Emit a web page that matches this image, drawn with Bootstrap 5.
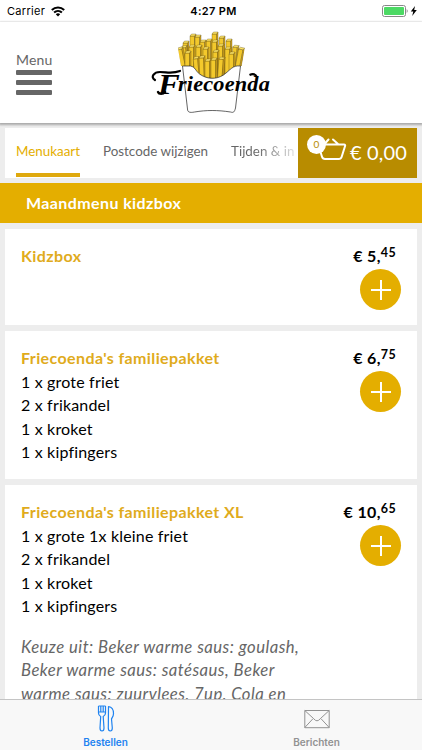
<!DOCTYPE html>
<html lang="nl">
<head>
    <meta charset="UTF-8">
    <meta name="viewport" content="width=device-width, initial-scale=1.0">
    <title>Friecoenda</title>
    <link rel="stylesheet" href="https://cdn.jsdelivr.net/npm/bootstrap@5.3.0/dist/css/bootstrap.min.css">
    <style>
        body { font-family: Lato, "Open Sans", sans-serif; font-size: 16px; line-height: 23.5px; background: #ededed; color: #000; height: 100vh; letter-spacing: .17px; }
        .ios { font-family: Inter, "Liberation Sans", sans-serif; letter-spacing: 0; }
        .status-bar { height: 22px; font-size: 11px; line-height: 22px; padding: 0 5px 0 7px; }
        .status-bar > div { flex: 1 1 0; }
        .carrier { letter-spacing: .3px; }
        .clock { letter-spacing: .35px; margin-left: 3px; }
        .site-header { height: 101px; padding: 0 16px; box-shadow: 0 1px 2px 1px rgba(0,0,0,.28); }
        .menu-btn { color: #666; padding-top: 27px; line-height: 21px; font-size: 14px; width: 36px; }
        .menu-btn i { display: block; height: 5px; margin-bottom: 5px; background: #666; border-radius: 1px; }
        .logo { width: 130px; height: 95px; margin: 3px 0 0 93px; }
        .tab-row { height: 50px; margin: 5px 5px 5px 5px; }
        .tab-links { font-size: 13.4px; color: #666; padding-left: 11px; gap: 23px; white-space: nowrap; line-height: 46px; letter-spacing: 0; }
        .tab-links .active { color: #e4ae00; border-bottom: 4px solid #dfa90d; height: 49px; }
        .fade-out { background: linear-gradient(90deg, #666 40%, #ddd 98%); -webkit-background-clip: text; background-clip: text; color: transparent; }
        .cart { background: #b88c00; color: #fff; width: 119px; font-size: 20px; padding: 0 10px 0 8px; }
        .cart-count { left: 1px; top: 7px; width: 19px; height: 19px; line-height: 19px; font-size: 10px; background: #fff; color: #b88c00; }
        .cat-title { background: #e4ae00; color: #fff; height: 40px; line-height: 39px; padding-left: 26px; margin-bottom: 6px; letter-spacing: .4px; }
        .product { background: #fff; margin: 0 5px 6px; padding: 15.5px 16px 15px; }
        .product:first-child { margin-top: -.6px; }
        .product h2 { color: #e0ab1c; font-size: 16px; line-height: 23.5px; margin: 0; font-weight: 700; letter-spacing: .39px; }
        .price { height: 25px; padding-right: 5px; letter-spacing: .35px; white-space: nowrap; }
        .price sup { font-size: 12.5px; top: -5px; line-height: 0; vertical-align: baseline; }
        .add { width: 41px; height: 41px; background: #e4ae00; }
        .choice { color: #666; width: 300px; margin-top: 18px; font-size: 16.7px; letter-spacing: .46px; white-space: nowrap; }
        .tabbar { height: 51px; background: #f8f8f8; border-top: 1px solid #c4c4c4; font-size: 10px; line-height: 12px; color: #929292; }
        .tabbar svg { display: block; margin: 0 auto; }
        .tabbar span { position: relative; top: 2px; }
        .tabbar .current { color: #1f83f0; }
    </style>
</head>
<body class="d-flex flex-column overflow-hidden">

    <div class="status-bar ios bg-white d-flex flex-shrink-0">
        <div class="d-flex align-items-center">
            <span class="carrier">Carrier</span>
            <svg class="ms-1" width="16" height="11" viewBox="-2 0 16 11" fill="none" stroke="#000" stroke-width="2">
                <path d="M.8 4C4.3.6 9.7.6 13.2 4M3.1 6.5c2.2-2.1 5.6-2.1 7.8 0"/>
                <path d="M7 10.5 4.8 8.2q2.2-1.8 4.4 0z" fill="#000" stroke="none"/>
            </svg>
        </div>
        <div class="clock text-center fw-semibold">4:27 PM</div>
        <div class="d-flex align-items-center justify-content-end">
            <svg width="35" height="12" viewBox="0 0 35 12">
                <rect x=".5" y=".5" width="23" height="11" rx="2" fill="#fff" stroke="#888"/>
                <rect x="2" y="2" width="20" height="8" rx="1" fill="#4cd964"/>
                <path d="M24.7 4q2 2 0 4z" fill="#888"/>
                <path d="M33 1 28.8 6.6h2.5L30.2 11l4.6-6h-2.6z"/>
            </svg>
        </div>
    </div>

    <header class="site-header bg-white d-flex flex-shrink-0">
        <div class="menu-btn"><span class="menu-label">Menu</span><i></i><i></i><i></i></div>
        <svg class="logo" viewBox="145 25 130 95">
            <defs>
                <g id="fry" stroke="#5e4a12" stroke-width=".35" stroke-linejoin="round">
                    <path d="M0 2h4.500v40H0z" fill="#f3c92c"/>
                    <path d="M4.500 2L6 0v40l-1.500 2z" fill="#d0a31c"/>
                    <path d="M0 2l1.500-2H6L4.500 2z" fill="#ffe668"/>
                </g>
                <clipPath id="pile"><path d="M174 25h74l-6 41c-8-1-14 5-18 9-8 6-19 5-25-2-5-5-8-7-16-7h-2z"/></clipPath>
            </defs>
            <!-- fries, back row first -->
            <g clip-path="url(#pile)">
                <use href="#fry" x="190" y="34"/><use href="#fry" x="195" y="35"/>
                <use href="#fry" x="212" y="32"/><use href="#fry" x="206" y="39"/>
                <use href="#fry" x="219" y="36"/>
                <use href="#fry" x="226" y="39"/>
                <use href="#fry" x="200" y="40"/>
                <use href="#fry" x="183" y="41"/>
                <use href="#fry" x="212" y="40"/><use href="#fry" x="218" y="44"/>
                <use href="#fry" transform="translate(181 46) rotate(-6)"/>
                <use href="#fry" transform="translate(177 48) rotate(-12)"/>
                <use href="#fry" transform="translate(233 45) rotate(6)"/>
                <use href="#fry" transform="translate(239 47) rotate(11)"/>
                <use href="#fry" x="189" y="45"/><use href="#fry" x="196" y="45"/>
                <use href="#fry" x="225" y="47"/>
                <use href="#fry" x="203" y="47"/><use href="#fry" x="213" y="50"/>
                <use href="#fry" x="185" y="51"/><use href="#fry" x="229" y="52"/>
                <use href="#fry" transform="translate(193 57) rotate(-5)"/>
                <use href="#fry" transform="translate(199 56) rotate(-2)"/>
                <use href="#fry" x="205" y="59"/><use href="#fry" x="211" y="58"/>
                <use href="#fry" transform="translate(219 57) rotate(4)"/>
            </g>
            <path d="M182.500 66h8c5 1 5 5 9 8 7 5 16 6 24 1 7-5 9-10 17-9l-5 42c-1 4-2 5-5 4-13-2-24-2-36 0-5 1-7 0-7-3z" fill="#fff" stroke="#222" stroke-width=".7"/>
            <g font-family="Liberation Serif" font-weight="700" font-style="italic">
                <text x="158" y="94" font-size="29" textLength="22" lengthAdjust="spacingAndGlyphs">F</text>
                <text x="178" y="90.500" font-size="22" textLength="92" lengthAdjust="spacingAndGlyphs">riecoenda</text>
            </g>
            <!-- swashes round the F and the d -->
            <path d="M155 80c-5-3-1-8 5-8 7 0 12 2 20-1" fill="none" stroke="#000" stroke-width="2.200" stroke-linecap="round"/>
            <path d="M165 92c-2 2.500-6 2.500-7 0" fill="none" stroke="#000" stroke-width="2.400" stroke-linecap="round"/>
            <path d="M249.500 75q5-2.500 7.500 2" fill="none" stroke="#000" stroke-width="2"/>
        </svg>
    </header>

    <div class="tab-row bg-white d-flex flex-shrink-0">
        <div class="tab-links d-flex flex-grow-1 overflow-hidden">
            <span class="active">Menukaart</span>
            <span class="t-postcode">Postcode wijzigen</span>
            <span class="fade-out">Tijden &amp; in</span>
        </div>
        <div class="cart d-flex flex-shrink-0 align-items-center justify-content-between">
            <div class="position-relative h-100">
                <svg width="41" height="50" viewBox="0 0 41 50" fill="none" stroke="#fff" stroke-width="2" stroke-linejoin="round" stroke-linecap="round">
                    <path d="M15 16.500h23c1 0 1.500.8 1 1.800l-3.300 10.500q-.7 2.200-3 2.200H19q-2.400 0-3-2.200L13 19q-.7-2.500 2-2.500zM18.500 16l4-4.500M32 16l-5-4.500"/>
                </svg>
                <span class="cart-count position-absolute rounded-circle text-center">0</span>
            </div>
            <span class="cart-total">€ 0,00</span>
        </div>
    </div>

    <div class="cat-title flex-shrink-0 fw-bold"><span>Maandmenu kidzbox</span></div>

    <main class="flex-grow-1 overflow-hidden">
        <div class="product d-flex justify-content-between">
            <h2>Kidzbox</h2>
            <div class="d-flex flex-column align-items-end">
                <div class="price fw-bold">€ 5,<sup>45</sup></div>
                <div class="add rounded-circle"><svg width="41" height="41" stroke="#fff" stroke-width="2"><path d="M11 21h20M21 11v20"/></svg></div>
            </div>
        </div>
        <div class="product d-flex justify-content-between">
            <div>
                <h2>Friecoenda's familiepakket</h2>
                1 x grote friet<br>2 x frikandel<br>1 x kroket<br>1 x kipfingers
            </div>
            <div class="d-flex flex-column align-items-end">
                <div class="price fw-bold">€ 6,<sup>75</sup></div>
                <div class="add rounded-circle"><svg width="41" height="41" stroke="#fff" stroke-width="2"><path d="M11 21h20M21 11v20"/></svg></div>
            </div>
        </div>
        <div class="product d-flex justify-content-between">
            <div>
                <h2>Friecoenda's familiepakket XL</h2>
                1 x grote 1x kleine friet<br>2 x frikandel<br>1 x kroket<br>1 x kipfingers
                <div class="choice fst-italic">Keuze uit: Beker warme saus: goulash,<br>Beker warme saus: satésaus, Beker<br>warme saus: zuurvlees, 7up, Cola en</div>
            </div>
            <div class="d-flex flex-column align-items-end">
                <div class="price fw-bold">€ 10,<sup>65</sup></div>
                <div class="add rounded-circle"><svg width="41" height="41" stroke="#fff" stroke-width="2"><path d="M11 21h20M21 11v20"/></svg></div>
            </div>
        </div>
    </main>

    <nav class="tabbar ios d-flex flex-shrink-0 text-center fw-semibold">
        <div class="current w-50 pt-1">
            <svg width="20" height="30" viewBox="0 0 20 30" fill="none" stroke="currentColor" stroke-width="1.200" stroke-linejoin="round">
                <path d="M2.500 2v7q0 2.500 2.200 3.500L4 24q0 3 2 3t2-3l-.8-11.500Q9.500 11.500 9.500 9V2M4.800 2v6M7.200 2v6M2.500 8h7M2.500 2h7"/>
                <path d="M12.500 2.500c3.500.5 5 4 5 7 0 3-1.500 4-2 5.500l.8 9c0 2-.8 3-2 3s-2-1-2-3z"/>
            </svg>
            <span class="t-bestellen">Bestellen</span>
        </div>
        <div class="w-50 pt-1">
            <svg width="26" height="30" viewBox="0 0 26 30" fill="none" stroke="currentColor">
                <path d="M.8 6.500h24.400v17.200H.8zM.8 6.500l9 8.300q3.200 4 6.400 0l9-8.300M.8 23.500l8-8.600M25.200 23.500l-8-8.600"/>
            </svg>
            <span class="t-berichten">Berichten</span>
        </div>
    </nav>

    <script src="https://cdn.jsdelivr.net/npm/bootstrap@5.3.0/dist/js/bootstrap.bundle.min.js"></script>
</body>
</html>
